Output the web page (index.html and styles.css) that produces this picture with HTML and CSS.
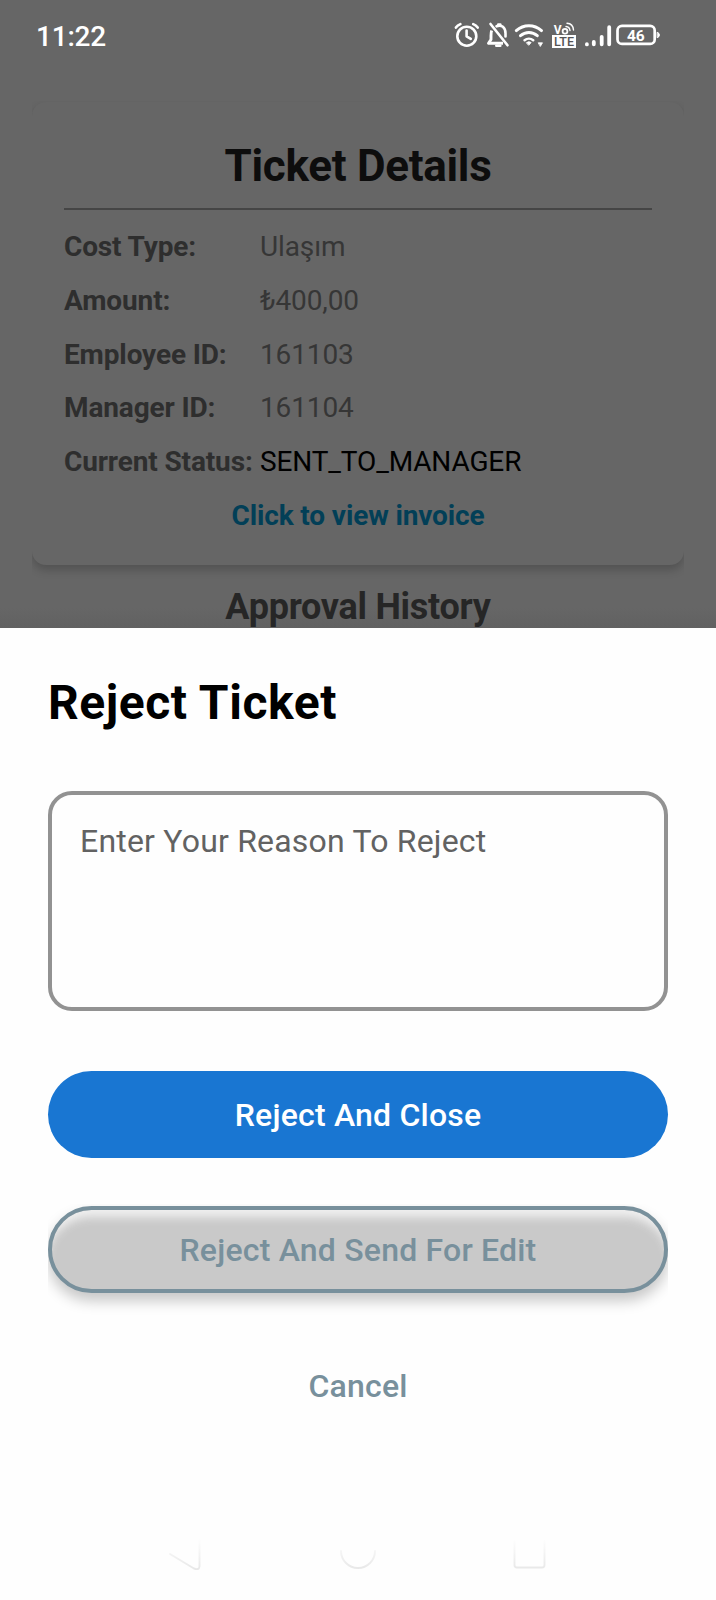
FILE: index.html
```html
<!DOCTYPE html>
<html lang="en">
<head>
<meta charset="utf-8">
<title>Ticket Details</title>
<link rel="stylesheet" href="styles.css">
</head>
<body>
<div class="screen">
  <div class="backdrop">
    <header class="status-bar">
      <span class="clock">11:22</span>
      <svg class="status-icons" width="240" height="50" viewBox="0 0 240 50" fill="none" stroke="#fff" stroke-width="2.6" stroke-linecap="round" stroke-linejoin="round">
        <!-- alarm -->
        <circle cx="26.8" cy="26.2" r="9.500"/>
        <path d="M26.600 20.500v5.800l4.200 2.600M15.900 17.600c1.200-1.700 2.700-2.800 4.500-3.500M37.700 17.600c-1.200-1.700-2.700-2.800-4.500-3.500"/>
        <!-- muted bell -->
        <path d="M50.500 14l17 21.300"/>
        <path d="M51.700 20.500c-.7 1.500-.7 3.500-.7 5.300v3.700l-2.500 3.700h14.500" stroke-linecap="butt" stroke-width="2.900"/>
        <path d="M56.500 16.300c5-2.200 9 1.200 9 7v3.200"/>
        <path d="M58.300 14.500h2M56.300 35.700h4"/>
        <!-- wifi -->
        <path d="M76.300 20.600c7.400-6.600 17.800-6.600 25.200 0M80.500 25.700c5-4.300 11.800-4.300 16.800 0" stroke-width="3"/>
        <path d="M84.600 30.200c2.500-2 6.100-2 8.600 0" stroke-width="2.600"/>
        <path d="M86.700 32.500q2.200-1.600 4.400 0L88.900 35z" fill="#fff" stroke-width="1"/>
        <path d="M98.500 32.800h4l-2 3.400z" fill="#fff" stroke-width=".8"/>
        <!-- VoLTE -->
        <rect x="112" y="25" width="24" height="13" fill="#fff" stroke="none"/>
        <text class="lte" x="124" y="35.900" text-anchor="middle">LTE</text>
        <text class="vo" x="113.800" y="23.700">V</text>
        <circle cx="125" cy="21.300" r="2.400" stroke-width="1.800"/>
        <path d="M126 16.500c2.200.2 3.700 1.600 4 4M127 13.300c3.700.2 6.200 2.900 6.500 6.700" stroke-width="1.400"/>
        <!-- signal -->
        <path d="M146.900 34.200v.2M153.800 32v2.300M161.700 26.800v7.500M169.200 17.200v17.100" stroke-width="3.800"/>
        <!-- battery -->
        <rect x="177.500" y="15.900" width="37.200" height="18" rx="4.500" stroke-width="2.700"/>
        <path d="M217.500 22.400c2.600.6 2.600 4.600 0 5.200z" fill="#fff" stroke-width="1"/>
        <text class="battery" x="195.800" y="30.500" text-anchor="middle">46</text>
      </svg>
    </header>

    <section class="card">
      <h1 class="card-title">Ticket Details</h1>
      <dl class="details">
        <dt>Cost Type:</dt><dd>Ulaşım</dd>
        <dt>Amount:</dt><dd>₺400,00</dd>
        <dt>Employee ID:</dt><dd>161103</dd>
        <dt>Manager ID:</dt><dd>161104</dd>
        <dt>Current Status:</dt><dd class="current">SENT_TO_MANAGER</dd>
      </dl>
      <div class="invoice">Click to view invoice</div>
    </section>
    <h2 class="history">Approval History</h2>
  </div>

  <section class="sheet">
    <h2 class="sheet-title">Reject Ticket</h2>
    <div class="reason">Enter Your Reason To Reject</div>
    <div class="btn btn-primary">Reject And Close</div>
    <div class="btn btn-outline">Reject And Send For Edit</div>
    <div class="btn btn-text">Cancel</div>
    <svg class="nav" width="400" height="60" viewBox="0 0 400 60" fill="none" stroke-width="1.900" stroke-linecap="round" stroke-linejoin="round">
      <defs>
        <linearGradient id="fade" x1="0" y1="8" x2="0" y2="38" gradientUnits="userSpaceOnUse">
          <stop offset="0" stop-color="#fefefe"/>
          <stop offset="1" stop-color="#e8e8e8"/>
        </linearGradient>
      </defs>
      <path stroke="url(#fade)" d="M12 23l24 14.500q5 2 5.500-2V8"/>
      <path stroke="url(#fade)" d="M183 20a17 17 0 1 0 34 0"/>
      <path stroke="url(#fade)" d="M356.500 8v26q0 2.500 2.500 2.500h25q2.500 0 2.500-2.500V8"/>
    </svg>
  </section>
</div>
</body>
</html>
```

FILE: styles.css
```css
* { box-sizing: border-box; }

body {
  margin: 0;
  font-family: Roboto, "Noto Sans", sans-serif;
  background: #fefefe;
}

h1, h2, dl, dd { margin: 0; }

.screen {
  width: 716px;
  height: 1600px;
  display: flex;
  flex-direction: column;
  overflow: hidden;
}

.backdrop {
  height: 628px;
  flex: none;
  background: linear-gradient(#666 608px, #616161 628px);
  overflow: hidden;
}

.status-bar {
  height: 102px;
  padding: 10px 36px 0 36px;
  display: flex;
  justify-content: space-between;
  align-items: flex-start;
}

.clock {
  font-size: 28px;
  line-height: 53px;
  font-weight: 500;
  letter-spacing: -.2px;
  color: #fff;
}

.status-icons text {
  stroke: none;
  fill: #fff;
  font-weight: 700;
}

.status-icons .lte { font-size: 12.500px; font-weight: 500; fill: #555; }
.status-icons .vo { font-size: 12px; }
.status-icons .battery { font-size: 15.500px; }

.card {
  height: 463px;
  margin: 0 32px;
  padding: 38px 32px 0;
  border-radius: 14px;
  background: #666;
  box-shadow: 0 5px 10px rgba(0, 0, 0, .2);
  clip-path: inset(-1px 0 -30px 0);
}

.card-title {
  height: 70px;
  border-bottom: 2px solid #454545;
  font-size: 44px;
  line-height: 52px;
  font-weight: 700;
  letter-spacing: -.3px;
  text-align: center;
  color: #0d0d0d;
}

.details {
  display: grid;
  grid-template-columns: 196px 1fr;
  grid-auto-rows: 53.800px;
  padding-top: 10px;
  font-size: 28px;
  line-height: 53.800px;
  letter-spacing: -.13px;
  white-space: nowrap;
  color: #2e2e2e;
}

.details dt { font-weight: 700; }
.details dd { font-weight: 400; color: #363636; }
.details .current { color: #000; }

.invoice {
  font-size: 28px;
  line-height: 54px;
  font-weight: 700;
  letter-spacing: -.13px;
  text-align: center;
  color: #023f57;
}

.history {
  padding-top: 21px;
  font-size: 36px;
  line-height: 42px;
  font-weight: 700;
  letter-spacing: -.27px;
  text-align: center;
  color: #262626;
}

.sheet {
  flex: 1;
  padding: 47px 48px 0;
  display: flex;
  flex-direction: column;
  background: #fefefe;
}

.sheet-title {
  margin-bottom: 60px;
  font-size: 48px;
  line-height: 56px;
  font-weight: 700;
  letter-spacing: .55px;
  color: #000;
}

.reason {
  height: 220px;
  margin-bottom: 60px;
  padding: 28px 28px;
  border: 4px solid #929292;
  border-radius: 24px;
  font-size: 32px;
  line-height: 36px;
  letter-spacing: .2px;
  color: #626262;
}

.btn {
  height: 87px;
  flex: none;
  border-radius: 44px;
  font-size: 32px;
  line-height: 88px;
  font-weight: 500;
  letter-spacing: .2px;
  text-align: center;
  color: #78909c;
}

.btn-primary {
  margin-bottom: 48px;
  background: #1976d2;
  color: #fff;
}

.btn-outline {
  margin-bottom: 49px;
  border: 4px solid #78909c;
  background: #c9c9c9;
  line-height: 81px;
  box-shadow: 0 8px 14px rgba(0, 0, 0, .22), inset 0 13px 10px -6px #f0f0f0;
  clip-path: inset(-2px 0 -40px 0);
}

.nav {
  flex: none;
  align-self: center;
  margin-top: 102px;
}
```
